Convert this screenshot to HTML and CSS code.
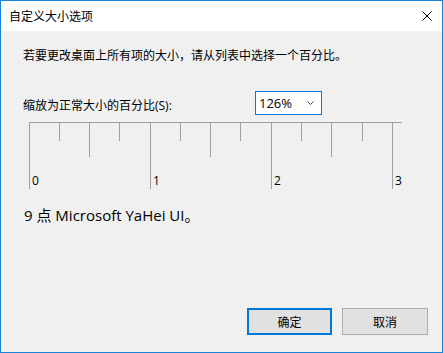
FILE: index.html
```html
<!DOCTYPE html>
<html lang="zh-CN">
  <head>
    <meta charset="UTF-8" />
    <title>自定义大小选项</title>
    <link rel="stylesheet" href="styles.css">
  </head>
  <body>
    <div class="window">
      <div class="titlebar">
        <span class="title">自定义大小选项</span>
        <svg class="close" width="10" height="10" viewBox="0 0 10 10">
          <path d="M0.5 0.5 L9.5 9.5 M9.5 0.5 L0.5 9.5" stroke="#000" stroke-width="1" fill="none" />
        </svg>
      </div>

      <div class="content">
        <p class="intro">若要更改桌面上所有项的大小，请从列表中选择一个百分比。</p>

        <div class="scale-row">
          <label class="scale-label">缩放为正常大小的百分比(S):</label>
          <div class="combo">
            <span>126%</span>
            <svg class="chevron" width="7" height="4" viewBox="0 0 7 4">
              <path d="M0.5 0.5 L3.5 3.5 L6.5 0.5" stroke="#444" stroke-width="1" fill="none" />
            </svg>
          </div>
        </div>

        <!-- ruler: 30.25px per quarter -->
        <svg class="ruler" width="375" height="68" viewBox="0 0 375 68">
          <g stroke="#a0a0a0" stroke-width="1" fill="none">
            <path d="M0 0.5 H373" />
            <path d="M0.5 0 V67 M121.5 0 V67 M242.5 0 V67 M363.5 0 V67" />
            <path d="M60.5 0 V35 M181.5 0 V35 M302.5 0 V35" />
            <path d="M30.5 0 V19 M90.5 0 V19 M151.5 0 V19 M211.5 0 V19 M272.5 0 V19 M333.5 0 V19" />
          </g>
          <g class="ruler-num">
            <text x="3" y="63">0</text>
            <text x="124" y="63">1</text>
            <text x="245" y="63">2</text>
            <text x="366" y="63">3</text>
          </g>
        </svg>

        <p class="sample">9 点 Microsoft YaHei UI。</p>

        <div class="buttons">
          <button class="btn default">确定</button>
          <button class="btn">取消</button>
        </div>
      </div>
    </div>
  </body>
</html>
```

FILE: styles.css
```css
body {
  margin: 0;
  font-family: "Open Sans", "Noto Sans CJK SC", sans-serif;
  font-size: 12px;
  color: #000;
}

.window {
  width: 443px;
  height: 353px;
  box-sizing: border-box;
  border: 1px solid #1883d7;
  background: #f0f0f0;
  display: flex;
  flex-direction: column;
}

.titlebar {
  height: 30px;
  background: #fff;
  display: flex;
  align-items: center;
  justify-content: space-between;
  padding: 0 10px 0 8px;
}

.title {
  line-height: 30px;
  padding-top: 1px;
}

.close {
  margin-top: -1px;
}

.content {
  flex: 1;
  display: flex;
  flex-direction: column;
  padding: 0 14px 17px 22px;
}

.intro {
  margin: 17px 0 0;
  line-height: 16px;
}

.scale-row {
  display: flex;
  align-items: center;
  margin-top: 27px;
}

.scale-label {
  width: 232px;
  padding-top: 3px;
}

.combo {
  width: 67px;
  height: 24px;
  box-sizing: border-box;
  border: 1px solid #0078d7;
  background: #fff;
  display: flex;
  align-items: center;
  justify-content: space-between;
  padding: 0 7px 0 3px;
  font-size: 13px;
}

.ruler {
  display: block;
  margin: 7px 0 0 6px;
}

.ruler-num {
  font-family: "Open Sans", sans-serif;
  font-size: 12px;
  fill: #000;
}

.sample {
  margin: 15px 0 0 1px;
  font-size: 15px;
  line-height: 20px;
}

.buttons {
  margin-top: auto;
  display: flex;
  justify-content: flex-end;
  gap: 10px;
}

.btn {
  width: 86px;
  height: 27px;
  box-sizing: border-box;
  border: 1px solid #adadad;
  background: #e1e1e1;
  font-family: inherit;
  font-size: 12px;
  color: #000;
  padding: 0;
}

.btn.default {
  width: 85px;
  border: 2px solid #0078d7;
}
```
